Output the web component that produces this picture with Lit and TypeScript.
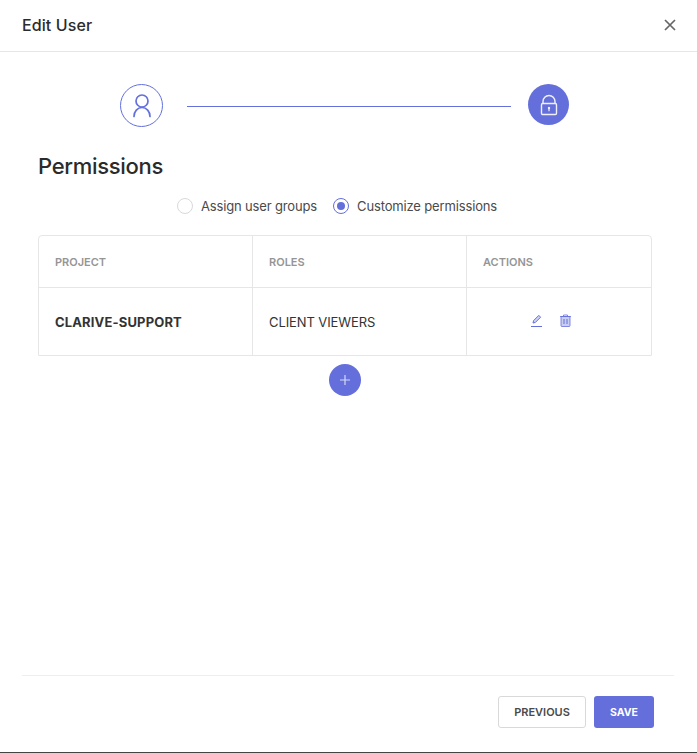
import { LitElement, html, css } from "lit";
import { customElement } from "lit/decorators.js";

@customElement("app-root")
export class AppRoot extends LitElement {
  static styles = css`
    :host {
      display: block;
      width: 697px;
      height: 753px;
      font-family: Inter, "Liberation Sans", sans-serif;
      color: #333;
      background: #fff;
      overflow: hidden;
    }

    .dialog {
      height: 752px;
      border-bottom: 1px solid #444;
      display: flex;
      flex-direction: column;
    }

    header {
      height: 49px;
      flex: none;
      border-bottom: 1px solid #e6e6e6;
      display: flex;
      align-items: center;
      justify-content: space-between;
      padding: 0 19px 2px 22px;
    }

    h1 {
      margin: 0;
      font-size: 16px;
      font-weight: 500;
      color: #2b2b2b;
      letter-spacing: 0.1px;
    }

    .close {
      display: flex;
      color: #666;
    }

    .body {
      flex: 1;
      padding: 32px 45px 0 38px;
    }

    .stepper {
      display: flex;
      align-items: flex-start;
      padding-left: 82px;
      height: 43px;
    }

    .step {
      flex: none;
      box-sizing: border-box;
      border-radius: 50%;
      display: flex;
      align-items: center;
      justify-content: center;
    }

    .step.done {
      width: 43px;
      height: 43px;
      border: 1px solid #6370dd;
      color: #6370dd;
    }

    .step.active {
      width: 41px;
      height: 41px;
      background: #646fdb;
      color: #fff;
    }

    .line {
      width: 324px;
      height: 1px;
      margin: 22px 17px 0 24px;
      background: #6370dd;
    }

    h2 {
      margin: 25px 0 0;
      font-size: 22px;
      line-height: 29px;
      font-weight: 500;
      color: #2b2b2b;
      letter-spacing: -0.3px;
    }

    .radios {
      display: flex;
      justify-content: center;
      gap: 16px;
      margin-top: 13px;
      height: 24px;
      font-size: 13px;
      letter-spacing: -0.15px;
      color: #4a4a4a;
      padding-right: 16px;
    }

    .radio {
      display: flex;
      align-items: center;
      gap: 8px;
    }

    .dot {
      box-sizing: border-box;
      width: 16px;
      height: 16px;
      border-radius: 50%;
      border: 1px solid #d9d9d9;
      display: flex;
      align-items: center;
      justify-content: center;
    }

    .dot.on {
      border-color: #646fdb;
    }

    .dot.on::after {
      content: "";
      width: 8px;
      height: 8px;
      border-radius: 50%;
      background: #646fdb;
    }

    .table {
      margin-top: 17px;
      width: 614px;
      box-sizing: border-box;
      border: 1px solid #e6e6e6;
      border-radius: 4px 4px 0 0;
      display: grid;
      grid-template-columns: 214px 214px 1fr;
      grid-template-rows: 52px 67px;
    }

    .cell {
      display: flex;
      align-items: center;
      padding: 0 16px;
      font-size: 13px;
      letter-spacing: -0.1px;
      border-right: 1px solid #e6e6e6;
      color: #333;
    }

    .cell:nth-child(3n) {
      border-right: none;
    }

    .th {
      border-bottom: 1px solid #e6e6e6;
      font-size: 11px;
      letter-spacing: 0;
      font-weight: 600;
      color: #959595;
      padding-top: 1px;
    }

    .strong {
      font-weight: 700;
      letter-spacing: 0.15px;
    }

    .actions {
      justify-content: center;
      gap: 16px;
      color: #646fdb;
      padding: 0 16px 2px 0;
    }

    .actions svg {
      display: block;
    }

    .add-row {
      display: flex;
      justify-content: center;
      width: 614px;
      margin-top: 8px;
    }

    .add {
      width: 32px;
      height: 32px;
      border-radius: 50%;
      background: #646fdb;
      display: flex;
      align-items: center;
      justify-content: center;
    }

    footer {
      flex: none;
      box-sizing: border-box;
      margin: 0 23px 0 22px;
      height: 77px;
      border-top: 1px solid #eee;
      display: flex;
      justify-content: flex-end;
      gap: 8px;
      padding: 20px 20px 0 0;
    }

    button {
      font-family: inherit;
      box-sizing: border-box;
      height: 32px;
      border-radius: 3px;
      font-size: 11px;
      font-weight: 600;
      padding: 0;
    }

    .prev {
      width: 88px;
      background: #fff;
      color: #4a4a4a;
      border: 1px solid #d9d9d9;
    }

    .save {
      width: 60px;
      background: #646fdb;
      color: #fff;
      border: none;
      font-size: 10.5px;
      font-weight: 700;
    }
  `;

  render() {
    return html`
      <div class="dialog">
        <header>
          <h1>Edit User</h1>
          <span class="close">
            <svg width="16" height="16" viewBox="0 0 16 16" fill="none" stroke="currentColor" stroke-width="1.7">
              <path d="M3 3l10 10M13 3L3 13" />
            </svg>
          </span>
        </header>
        <div class="body">
          <div class="stepper">
            <div class="step done">
              <svg width="20" height="26" viewBox="0 0 20 26" fill="none" stroke="currentColor" stroke-width="1.7" stroke-linecap="round">
                <circle cx="10" cy="8" r="6" />
                <path d="M2 23.5c0-5 3.5-9 8-9s8 4 8 9" />
              </svg>
            </div>
            <div class="line"></div>
            <div class="step active">
              <svg width="18" height="22" viewBox="0 0 18 22" fill="none" stroke="currentColor" stroke-width="1.4" opacity="0.9">
                <path d="M3 10V7.5a6 6 0 0 1 12 0V10" />
                <rect x="1.5" y="9.5" width="15" height="11" rx="1.2" />
                <circle cx="9" cy="14" r="1.2" fill="currentColor" stroke="none" />
                <path d="M9 14v3.2" stroke-width="1.2" />
              </svg>
            </div>
          </div>
          <h2>Permissions</h2>
          <div class="radios">
            <label class="radio"><span class="dot"></span>Assign user groups</label>
            <label class="radio"><span class="dot on"></span>Customize permissions</label>
          </div>
          <div class="table">
            <div class="cell th">PROJECT</div>
            <div class="cell th">ROLES</div>
            <div class="cell th">ACTIONS</div>
            <div class="cell strong">CLARIVE-SUPPORT</div>
            <div class="cell">CLIENT VIEWERS</div>
            <div class="cell actions">
              <svg width="13" height="13" viewBox="0 0 13 13" fill="currentColor" fill-opacity="0.3" stroke="currentColor" stroke-width="1">
                <path d="M3 9l.6-2.4L8.8 1.4l1.8 1.8-5.2 5.2L3 9z" />
                <path d="M1 12.5h11" />
              </svg>
              <svg width="13" height="13" viewBox="0 0 13 13" fill="none" stroke="currentColor" stroke-width="1">
                <path d="M2 2.5h9v9.2c0 .5-.3.8-.8.8H2.8c-.5 0-.8-.3-.8-.8V2.5z" fill="currentColor" fill-opacity="0.35" stroke-opacity="0.8" />
                <path d="M1 2.5h11M4.5 2.5V1h4v1.5" stroke-opacity="0.8" />
                <path d="M5 5v5M8 5v5" />
              </svg>
            </div>
          </div>
          <div class="add-row">
            <div class="add">
              <svg width="12" height="12" viewBox="0 0 12 12" stroke="#d5d8f5" stroke-width="1.2">
                <path d="M6 1v10M1 6h10" />
              </svg>
            </div>
          </div>
        </div>
        <footer>
          <button class="prev">PREVIOUS</button>
          <button class="save">SAVE</button>
        </footer>
      </div>
    `;
  }
}
